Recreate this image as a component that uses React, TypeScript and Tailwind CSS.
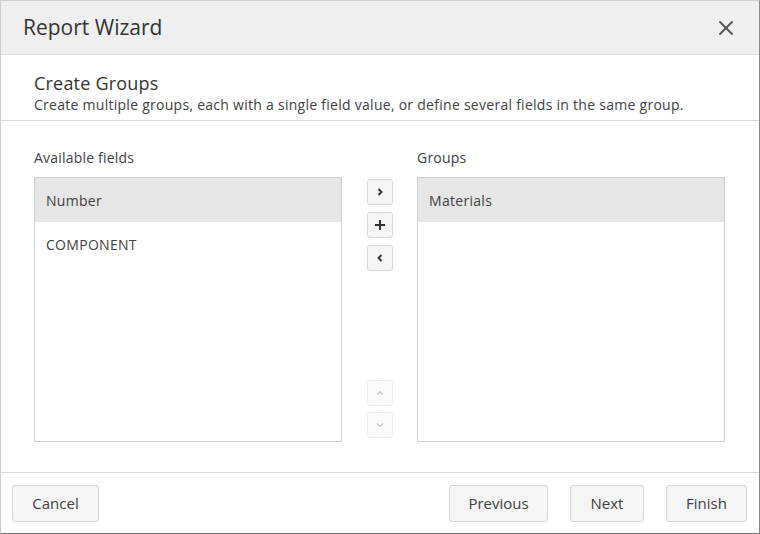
import { X } from 'lucide-react';

const font = { fontFamily: '"Segoe UI", "Open Sans", sans-serif' };

function ListBox({ items, selected }: { items: string[]; selected: number }) {
  return (
    <div className="h-[265px] w-[308px] border border-[#cfcfcf] bg-white">
      {items.map((it, i) => (
        <div
          key={it}
          className={
            'flex h-[44px] items-center pl-[11px] text-[14px] tracking-[0.3px] text-[#404040] ' +
            (i === selected ? 'bg-[#e6e6e6]' : '')
          }
        >
          {it}
        </div>
      ))}
    </div>
  );
}

function SmallButton({ children, disabled }: { children: React.ReactNode; disabled?: boolean }) {
  return (
    <button
      className={
        'flex h-[26px] w-[26px] items-center justify-center rounded-[3px] border ' +
        (disabled
          ? 'border-[#ececec] bg-[#fafafa] text-[#c8c8c8]'
          : 'border-[#d9d9d9] bg-[#f5f5f5] text-[#333]')
      }
    >
      {children}
    </button>
  );
}

function FooterButton({ label, width }: { label: string; width: string }) {
  return (
    <button
      className={
        'flex h-[37px] items-center justify-center rounded-[3px] border border-[#d6d6d6] bg-[#f5f5f5] text-[15px] text-[#404040] ' +
        width
      }
    >
      {label}
    </button>
  );
}

export default function App() {
  return (
    <div
      style={font}
      className="flex h-[534px] w-[760px] flex-col border border-[#cdcdcd] border-b-[#6e6e6e] border-r-[#8a8a8a] bg-white text-[#404040]"
    >
      {/* header */}
      <div className="flex h-[54px] shrink-0 items-center justify-between border-b border-[#d9d9d9] bg-[#efefef] pl-[22px] pr-[21px]">
        <h1 className="text-[21px] text-[#333]">Report Wizard</h1>
        <X size={24} strokeWidth={1.9} className="text-[#555]" />
      </div>

      {/* step title */}
      <div className="shrink-0 border-b border-[#dcdcdc] px-[33px] pb-[6px] pt-[16px]">
        <div className="text-[18px] tracking-[0.2px] leading-[24px] text-[#333]">Create Groups</div>
        <div className="text-[14px] tracking-[0.27px] leading-[19px] text-[#404040]">
          Create multiple groups, each with a single field value, or define several fields in the same group.
        </div>
      </div>

      {/* body */}
      <div className="flex flex-1 items-end px-[33px] pb-[30px]">
        <div className="flex flex-col">
          <div className="mb-[10px] text-[14px] tracking-[0.2px] leading-[19px]">Available fields</div>
          <ListBox items={['Number', 'COMPONENT']} selected={0} />
        </div>
        <div className="flex h-[265px] w-[75px] flex-col items-center pt-[2px] pb-[4px]">
          <div className="flex flex-col gap-[7px]">
            <SmallButton>
              <svg width="10" height="10" viewBox="0 0 10 10"><path d="M3.5 2 6.5 5 3.5 8" fill="none" stroke="currentColor" strokeWidth="1.9" /></svg>
            </SmallButton>
            <SmallButton>
              <svg width="12" height="12" viewBox="0 0 12 12"><path d="M6 1v10M1 6h10" fill="none" stroke="currentColor" strokeWidth="2" /></svg>
            </SmallButton>
            <SmallButton>
              <svg width="10" height="10" viewBox="0 0 10 10"><path d="M6.5 2 3.5 5l3 3" fill="none" stroke="currentColor" strokeWidth="1.9" /></svg>
            </SmallButton>
          </div>
          <div className="mt-auto flex flex-col gap-[6px]">
            <SmallButton disabled>
              <svg width="10" height="8" viewBox="0 0 10 8"><path d="M2 5.5 5 2.5l3 3" fill="none" stroke="currentColor" strokeWidth="1.2" /></svg>
            </SmallButton>
            <SmallButton disabled>
              <svg width="10" height="8" viewBox="0 0 10 8"><path d="M2 2.5 5 5.5l3-3" fill="none" stroke="currentColor" strokeWidth="1.2" /></svg>
            </SmallButton>
          </div>
        </div>
        <div className="flex flex-col">
          <div className="mb-[10px] text-[14px] tracking-[0.2px] leading-[19px]">Groups</div>
          <ListBox items={['Materials']} selected={0} />
        </div>
      </div>

      {/* footer */}
      <div className="flex h-[61px] shrink-0 items-center border-t border-[#dcdcdc] pl-[11px] pr-[12px]">
        <FooterButton label="Cancel" width="w-[87px]" />
        <div className="ml-auto flex gap-[22px]">
          <FooterButton label="Previous" width="w-[99px]" />
          <FooterButton label="Next" width="w-[74px]" />
          <FooterButton label="Finish" width="w-[81px]" />
        </div>
      </div>
    </div>
  );
}
